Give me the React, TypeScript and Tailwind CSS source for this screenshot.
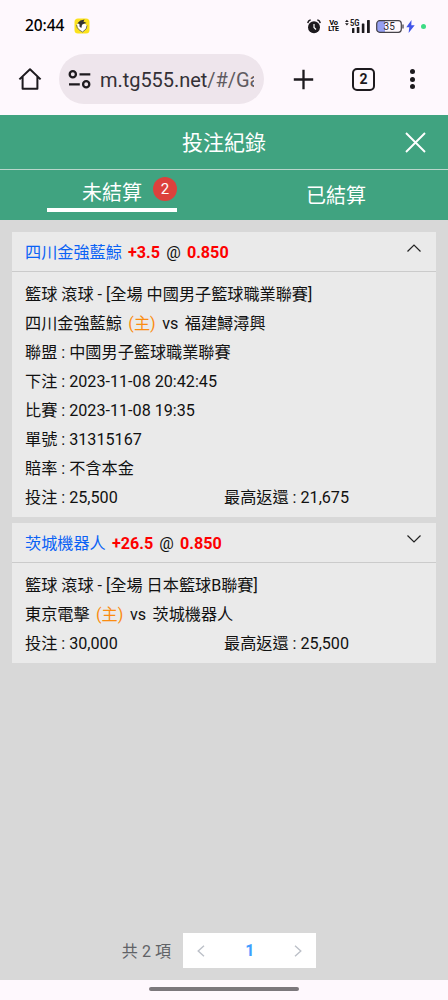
import { useState } from "react";
import clsx from "clsx";

type Bet = {
  pick: string;
  handicap: string;
  odds: string;
  market: string;
  home: string;
  away: string;
  details: { label: string; value: string }[];
  stake: string;
  payout: string;
};

const bets: Bet[] = [
  {
    pick: "四川金強藍鯨",
    handicap: "+3.5",
    odds: "0.850",
    market: "籃球 滾球 - [全場 中國男子籃球職業聯賽]",
    home: "四川金強藍鯨",
    away: "福建鱘潯興",
    details: [
      { label: "聯盟", value: "中國男子籃球職業聯賽" },
      { label: "下注", value: "2023-11-08 20:42:45" },
      { label: "比賽", value: "2023-11-08 19:35" },
      { label: "單號", value: "31315167" },
      { label: "賠率", value: "不含本金" },
    ],
    stake: "25,500",
    payout: "21,675",
  },
  {
    pick: "茨城機器人",
    handicap: "+26.5",
    odds: "0.850",
    market: "籃球 滾球 - [全場 日本籃球B聯賽]",
    home: "東京電擊",
    away: "茨城機器人",
    details: [{ label: "聯盟", value: "日本籃球B聯賽" }],
    stake: "30,000",
    payout: "25,500",
  },
];

function StatusBar() {
  return (
    <div className="flex h-[50px] items-center pt-[2px] pr-[22px] pl-[25px] text-black">
      <span className="w-[49px] font-['Noto_Sans'] text-[15.5px] leading-none font-medium tracking-[-0.1px]">
        20:44
      </span>
      <svg width="16" height="16" viewBox="0 0 16 16">
        <rect x="0.5" y="0.5" width="15" height="15" rx="3.5" fill="#fbe21c" />
        <path d="M2.6 6.6 5.2 5l2 1.4L10.6 5.4l2.4 2-.8 3.6L8.5 14l-3.8-2.6Z" fill="#fff" />
        <path d="M3.4 5.2 6.4 2.6 10.6 1.6 9.4 3.4 12.6 5 9.8 5.8 8 6.8 7.4 10 5.6 8.8 5.4 6Z" fill="#333" />
        <path d="m2.6 6.8.5 2.6 1.8 2.3 3.6 2.3 3.6-3 .9-3.6" fill="none" stroke="#555" strokeWidth="0.8" />
      </svg>
      <div className="ml-auto flex items-center">
        <svg width="14" height="15" viewBox="0 0 14 15" fill="none" stroke="#1d1a1e">
          <path d="M.8 4.2C1 2.5 2 1.3 3.7.9M13.2 4.2C13 2.5 12 1.3 10.3.9" strokeWidth="1.4" />
          <circle cx="7" cy="8.2" r="6" fill="#1d1a1e" stroke="none" />
          <path d="M7 5v3.5l2 2" stroke="#fff" strokeWidth="1.2" />
        </svg>
        <span className="ml-[7px] flex w-[11px] flex-col items-center text-[7.5px] leading-[7px] font-bold tracking-[-0.3px]">
          <span>Vo</span>
          <span className="text-[7px]">LTE</span>
        </span>
        <svg className="ml-[6px]" width="25" height="14" viewBox="0 0 25 14" fill="#1d1a1e">
          <path d="M0 3 1.9.8 3.8 3ZM0 4.2h3.8L1.9 6.4Z" />
          <text x="5" y="6.6" textLength="9.5" lengthAdjust="spacingAndGlyphs" fontSize="8.5" fontWeight="700">5G</text>
          <rect x="7" y="9" width="2.4" height="5" rx=".6" />
          <rect x="11.8" y="8" width="2.6" height="6" rx=".6" />
          <rect x="16.8" y="4.5" width="2.6" height="9.5" rx=".6" />
          <rect x="22" y="1" width="2.8" height="13" rx=".6" />
        </svg>
        <svg className="ml-[6px]" width="28" height="13" viewBox="0 0 28 13">
          <path d="M3.5.7H9v11.6H3.5a2.8 2.8 0 0 1-2.8-2.8v-6A2.8 2.8 0 0 1 3.5.7Z" fill="#959ff2" />
          <rect x=".7" y=".7" width="24.6" height="11.6" rx="3" fill="none" stroke="#454248" strokeWidth="1.2" />
          <path d="M27 4.5v4" stroke="#454248" strokeWidth="1.3" />
          <text x="7.4" y="10.1" textLength="11.4" fontSize="10" fill="#29252b">35</text>
        </svg>
        <svg className="ml-[2px]" width="9" height="13" viewBox="0 0 9 13">
          <path d="M5.5 0 .3 7.3h3L2.6 13 8.7 5.2H5.3Z" fill="#4054e8" />
        </svg>
        <span className="ml-[6px] size-[5px] rounded-full bg-[#3ddc84]" />
      </div>
    </div>
  );
}

function BrowserBar() {
  return (
    <div className="flex h-[65px] items-start pt-[4px] text-[#1d1a1e]">
      <svg className="mt-[13px] ml-[18px]" width="24" height="24" viewBox="0 0 24 24" fill="none" stroke="currentColor" strokeWidth="2" strokeLinejoin="round">
        <path d="M1.4 12.4 12 2.2l10.6 10.2M4.6 9.8v11.9h14.8V9.8" />
      </svg>
      <div className="ml-[17px] flex h-[50px] w-[205px] items-center rounded-full bg-[#eee5ec] pl-[9px]">
        <svg width="23" height="19" viewBox="0 0 23 19" fill="none" stroke="currentColor" strokeWidth="2.3">
          <circle cx="4.8" cy="4.3" r="3.1" />
          <path d="M11.5 4.3h10.8M1 14.3h10.8" />
          <circle cx="18.2" cy="14.3" r="3.1" />
        </svg>
        <span className="ml-[9px] w-[154px] overflow-hidden pt-[2px] text-[20px] tracking-[-0.05px] whitespace-nowrap text-[#343036]">
          m.tg555.net<span className="text-[#605b61]">/#/Ga</span>
        </span>
      </div>
      <svg className="mt-[15px] ml-[29px]" width="21" height="21" viewBox="0 0 21 21" stroke="currentColor" strokeWidth="2.3">
        <path d="M10.5.8v19.4M.8 10.5h19.4" />
      </svg>
      <div className="mt-[14px] ml-[38px] flex size-[23px] items-center justify-center rounded-[5px] border-2 border-current text-[14px] font-bold">
        2
      </div>
      <div className="mt-[15px] ml-[35px] flex w-[5px] flex-col gap-[2.5px]">
        <i className="size-[5px] rounded-full bg-current" />
        <i className="size-[5px] rounded-full bg-current" />
        <i className="size-[5px] rounded-full bg-current" />
      </div>
    </div>
  );
}

function BetCard({ bet, defaultOpen }: { bet: Bet; defaultOpen: boolean }) {
  const [open, setOpen] = useState(defaultOpen);

  return (
    <section className="bg-[#eaeaea] pb-[5px] text-[16.15px]">
      <button
        onClick={() => setOpen(!open)}
        className="flex h-[40px] w-full items-center justify-between border-b border-[#cbcbcb] pr-[15px] pl-[13px]"
      >
        <span className="flex gap-[6.2px] pt-[3px] whitespace-nowrap">
          <span className="text-[#0a62f5]">{bet.pick}</span>
          <b className="text-[#fd0000]">{bet.handicap}</b>
          <span>@</span>
          <b className="text-[#fd0000]">{bet.odds}</b>
        </span>
        <svg
          className={clsx("mb-[8px]", !open && "rotate-180")}
          width="14"
          height="8"
          viewBox="0 0 14 8"
          fill="none"
          stroke="#222"
          strokeWidth="1.2"
        >
          <path d="M.5 7.5 7 1l6.5 6.5" />
        </svg>
      </button>
      <div className="px-[13px] pt-[8px] leading-[29px] whitespace-nowrap">
        <p>{bet.market}</p>
        <p className="flex gap-[6.5px]">
          <span>{bet.home}</span>
          <span className="text-[#fb8c10]">(主)</span>
          <span>vs</span>
          <span>{bet.away}</span>
        </p>
        {open &&
          bet.details.map((d) => (
            <p key={d.label}>
              {d.label} : {d.value}
            </p>
          ))}
        <div className="grid grid-cols-2">
          <p>投注 : {bet.stake}</p>
          <p>最高返還 : {bet.payout}</p>
        </div>
      </div>
    </section>
  );
}

function Pagination() {
  return (
    <div className="mt-auto mb-[12px] flex items-center justify-center pr-[10px] text-[#606266]">
      <span className="mr-[12px] pt-[2px] tracking-[0.1px]">共 2 項</span>
      <div className="flex h-[35px] w-[133px] items-center justify-between bg-white px-[14px]">
        <svg width="8" height="12" viewBox="0 0 8 12" fill="none" stroke="#bcc0c8" strokeWidth="1.4">
          <path d="M7 .7 1.2 6 7 11.3" />
        </svg>
        <b className="text-[#409eff]">1</b>
        <svg width="8" height="12" viewBox="0 0 8 12" fill="none" stroke="#bcc0c8" strokeWidth="1.4">
          <path d="M1 .7 6.8 6 1 11.3" />
        </svg>
      </div>
    </div>
  );
}

export default function App() {
  const [tab, setTab] = useState("open");

  return (
    <div className="flex h-[1000px] w-[448px] flex-col overflow-hidden bg-[#fef8fd] font-[Roboto,'Noto_Sans_CJK_TC',sans-serif] text-[16px] text-[#111]">
      <StatusBar />
      <BrowserBar />
      <header className="grid h-[55px] grid-cols-[1fr_auto_1fr] items-center border-b border-[#b9d6cb] bg-[#40a380] text-white">
        <h1 className="col-start-2 pt-[3px] text-[21px]">投注紀錄</h1>
        <button className="mr-[22px] justify-self-end">
          <svg width="21" height="21" viewBox="0 0 21 21" stroke="currentColor" strokeWidth="1.9">
            <path d="m1 1 19 19M20 1 1 20" />
          </svg>
        </button>
      </header>
      <nav className="grid h-[50px] grid-cols-2 bg-[#40a380] text-[20px] text-white">
        <button onClick={() => setTab("open")} className="flex justify-center">
          <span
            className={clsx(
              "flex h-[42px] w-[130px] items-center pt-[7px] pl-[35px]",
              tab === "open" && "border-b-4 border-white"
            )}
          >
            未結算
            <span className="mb-[7px] ml-[11px] flex size-[24px] items-center justify-center rounded-full bg-[#dc413c] text-[15px]">
              2
            </span>
          </span>
        </button>
        <button onClick={() => setTab("settled")} className="flex justify-center pt-[11px] leading-[30px]">
          已結算
        </button>
      </nav>
      <main className="flex flex-1 flex-col gap-[6px] bg-[#d8d8d8] px-[12px] pt-[12px]">
        {bets.map((bet, i) => (
          <BetCard key={bet.pick} bet={bet} defaultOpen={i === 0} />
        ))}
        <Pagination />
      </main>
      <footer className="flex h-[20px] justify-center pt-[7px]">
        <div className="h-[4px] w-[150px] rounded-full bg-[#7c787c]" />
      </footer>
    </div>
  );
}
